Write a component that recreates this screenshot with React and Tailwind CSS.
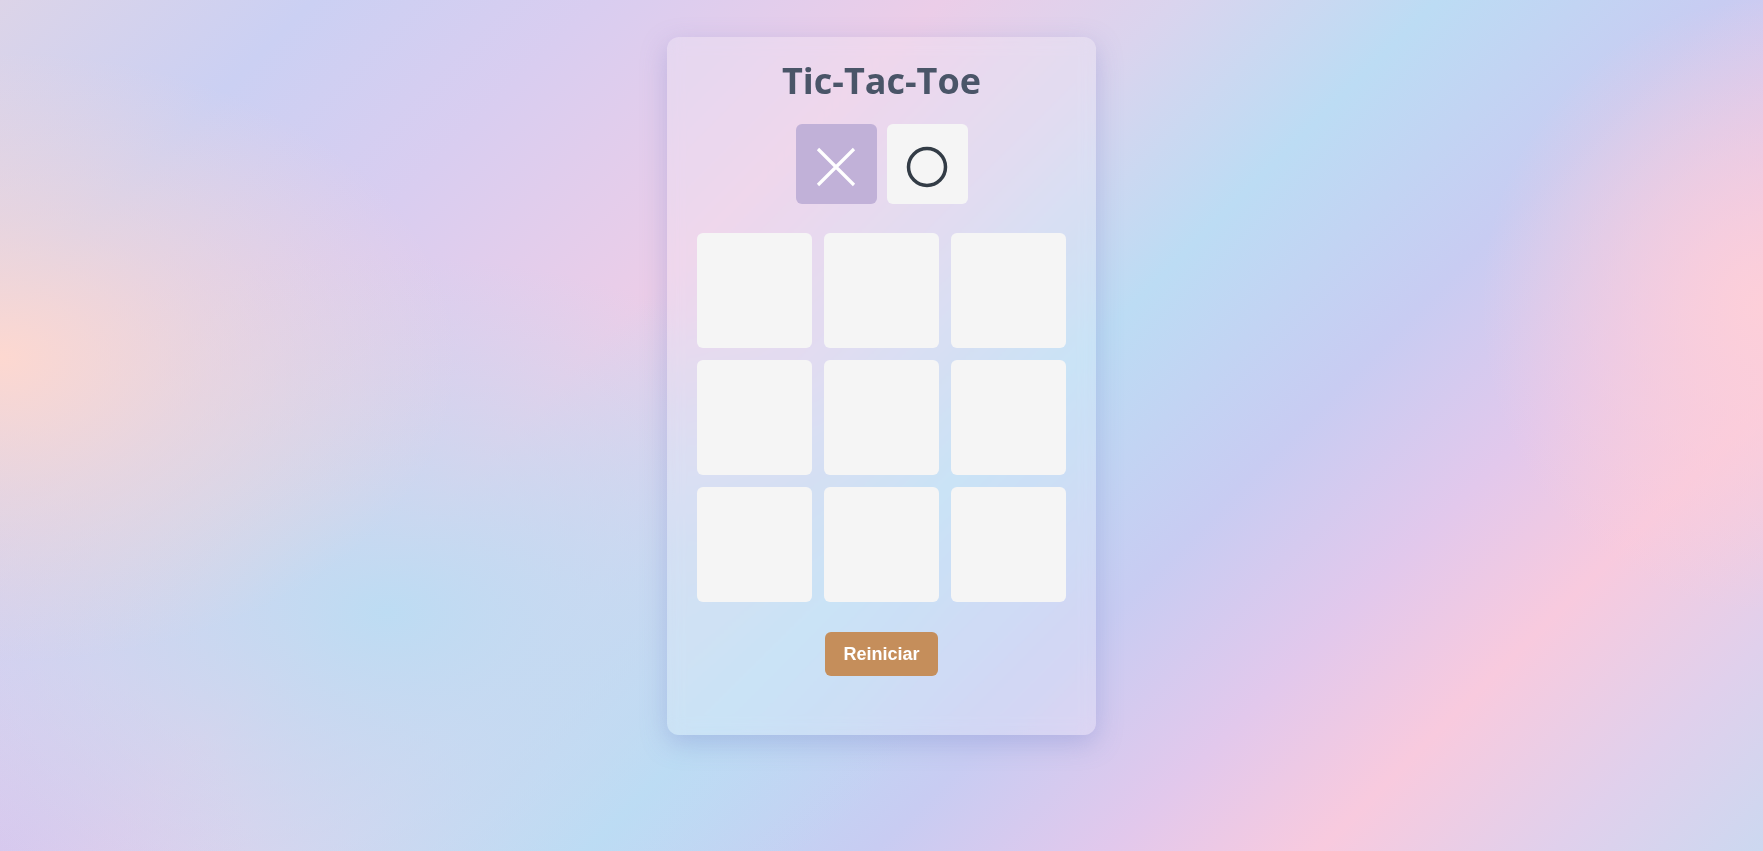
import React, { useState } from 'react';

const XMark = ({ className }) => (
  <svg viewBox="0 0 40 40" className={className} fill="none" stroke="currentColor" strokeWidth="3.2" strokeLinecap="butt">
    <path d="M2 2 L38 38 M38 2 L2 38" />
  </svg>
);

const OMark = ({ className }) => (
  <svg viewBox="0 0 44 44" className={className} fill="none" stroke="currentColor" strokeWidth="3.5">
    <circle cx="22" cy="22" r="18.5" />
  </svg>
);

const App = () => {
  const [board, setBoard] = useState(Array(9).fill(null));
  const [player, setPlayer] = useState('X');

  const play = (i) => {
    if (board[i]) return;
    const next = [...board];
    next[i] = player;
    setBoard(next);
    setPlayer(player === 'X' ? 'O' : 'X');
  };

  const reset = () => {
    setBoard(Array(9).fill(null));
    setPlayer('X');
  };

  return (
    <div className="min-h-screen w-full flex justify-center items-start pt-[37px] bg-[radial-gradient(ellipse_26%_36%_at_0%_42%,#fdd8d0_0%,#fdd8d080_45%,transparent_100%),radial-gradient(ellipse_32%_42%_at_22%_72%,#bddcf3_0%,#bddcf380_50%,transparent_100%),radial-gradient(ellipse_14%_22%_at_0%_100%,#d8c8ee_0%,transparent_100%),radial-gradient(ellipse_16%_36%_at_100%_36%,#fdcfd9_0%,transparent_100%),linear-gradient(135deg,#dcd4e8_0%,#cbd0f3_12%,#d9cdf0_23%,#ebcde8_36%,#dad4ee_45%,#bcdcf4_55%,#c8ccf2_66%,#e2c8ec_75%,#f8cade_83%,#e0d0ec_92%,#ccd8f0_100%)]">
      {/* Game card */}
      <div className="w-[429px] h-[698px] flex flex-col items-center px-[30px] pt-[24px] rounded-xl bg-white/20 shadow-[0_8px_26px_rgba(120,130,200,0.35)] backdrop-blur-sm">
        <h1 className="text-[36px] leading-[40px] font-bold text-[#4a5568] font-['Open_Sans',sans-serif]">
          Tic-Tac-Toe
        </h1>

        {/* Player selector */}
        <div className="flex gap-[10px] mt-[23px]">
          <button
            onClick={() => setPlayer('X')}
            className={`w-[81px] h-[80px] rounded-md flex items-center justify-center pt-[6px] ${player === 'X' ? 'bg-[#c1b1d8] text-white' : 'bg-[#f5f5f5] text-[#374151]'}`}
          >
            <XMark className="w-[40px] h-[40px]" />
          </button>
          <button
            onClick={() => setPlayer('O')}
            className={`w-[81px] h-[80px] rounded-md flex items-center justify-center pt-[6px] ${player === 'O' ? 'bg-[#c1b1d8] text-white' : 'bg-[#f5f5f5] text-[#333c46]'}`}
          >
            <OMark className="w-[44px] h-[44px]" />
          </button>
        </div>

        {/* Board */}
        <div className="grid grid-cols-3 gap-[12px] mt-[29px]">
          {board.map((cell, i) => (
            <button
              key={i}
              onClick={() => play(i)}
              className="w-[115px] h-[115px] rounded-md bg-[#f5f5f5] flex items-center justify-center text-[#374151]"
            >
              {cell === 'X' && <XMark className="w-[60px] h-[60px]" />}
              {cell === 'O' && <OMark className="w-[64px] h-[64px]" />}
            </button>
          ))}
        </div>

        <button
          onClick={reset}
          className="mt-[30px] w-[113px] h-[44px] rounded-md bg-[#c58e5b] text-white text-[18px] font-bold font-['Liberation_Sans',Arial,sans-serif]"
        >
          Reiniciar
        </button>
      </div>
    </div>
  );
};

export default App;
